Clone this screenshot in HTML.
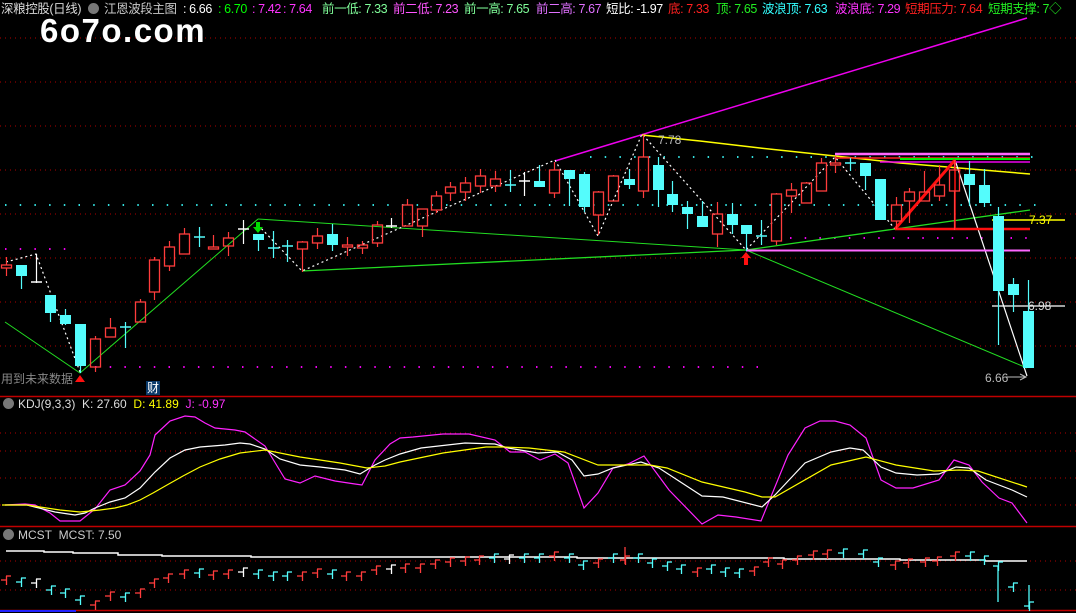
<!DOCTYPE html>
<html><head><meta charset="utf-8"><style>
html,body{margin:0;padding:0;background:#000;}
#w{position:relative;width:1076px;height:613px;overflow:hidden;background:#000;font-family:"Liberation Sans","Noto Sans CJK SC",sans-serif;}
.t{position:absolute;top:2px;font-size:12.5px;white-space:nowrap;line-height:14px;letter-spacing:-0.4px;}
svg{position:absolute;left:0;top:0;}
</style></head><body><div id="w">
<svg id="s" width="1076" height="613" xmlns="http://www.w3.org/2000/svg">
<g id="grid"></g>
<g id="lines"></g>
<g id="cand"></g>
<g id="over"></g>
</svg>
<div class="t" style="left:1px;color:#d8d8d8">深粮控股(日线)</div>
<div style="position:absolute;left:88px;top:3px;width:11px;height:11px;border-radius:50%;background:#777"></div>
<div class="t" style="left:104px;color:#c8c8c8">江恩波段主图</div>
<div class="t" style="left:183px;color:#fff">: 6.66</div>
<div class="t" style="left:218px;color:#00ff00">: 6.70</div>
<div class="t" style="left:252px;color:#ff33ff">: 7.42</div>
<div class="t" style="left:283px;color:#ff33ff">: 7.64</div>
<div class="t" style="left:322px;color:#80ff9a">前一低: 7.33</div>
<div class="t" style="left:393px;color:#ff55ff">前二低: 7.23</div>
<div class="t" style="left:464px;color:#80ff9a">前一高: 7.65</div>
<div class="t" style="left:536px;color:#e070ff">前二高: 7.67</div>
<div class="t" style="left:606px;color:#fff">短比: -1.97</div>
<div class="t" style="left:668px;color:#ff2020">底: 7.33</div>
<div class="t" style="left:716px;color:#22ee22">顶: 7.65</div>
<div class="t" style="left:762px;color:#33ffff">波浪顶: 7.63</div>
<div class="t" style="left:835px;color:#ff33ff">波浪底: 7.29</div>
<div class="t" style="left:905px;color:#ff2020">短期压力: 7.64</div>
<div class="t" style="left:988px;color:#22ee22">短期支撑: 7◇</div>
<div style="position:absolute;left:40px;top:13px;font-size:33px;line-height:36px;font-weight:bold;color:#fff;letter-spacing:1.5px;">6o7o.com</div>
<div style="position:absolute;left:1px;top:370px;font-size:12px;color:#888">用到未来数据</div>
<div style="position:absolute;left:146px;top:381px;width:14px;height:14px;background:#0a3a6a;color:#fff;font-size:12px;line-height:14px;text-align:center">财</div>
<div style="position:absolute;left:658px;top:133px;font-size:12px;color:#bbb">7.78</div>
<div style="position:absolute;left:1029px;top:213px;font-size:12px;color:#ffff00">7.37</div>
<div style="position:absolute;left:1028px;top:299px;font-size:12px;color:#ddd">6.98</div>
<div style="position:absolute;left:985px;top:371px;font-size:12px;color:#bbb">6.66</div>
<div style="position:absolute;left:3px;top:398px;width:11px;height:11px;border-radius:50%;background:#777"></div>
<div style="position:absolute;left:18px;top:397px;font-size:12px;color:#ddd;white-space:nowrap">KDJ(9,3,3)&nbsp; K: 27.60 <span style="color:#ffff00">&nbsp;D: 41.89</span> <span style="color:#ff33ff">&nbsp;J: -0.97</span></div>
<div style="position:absolute;left:3px;top:529px;width:11px;height:11px;border-radius:50%;background:#777"></div>
<div style="position:absolute;left:18px;top:528px;font-size:12px;color:#ccc;white-space:nowrap">MCST&nbsp; MCST: 7.50</div>
</div>
<script>
var NS="http://www.w3.org/2000/svg";
function el(p,t,a){var e=document.createElementNS(NS,t);for(var k in a)e.setAttribute(k,a[k]);document.getElementById(p).appendChild(e);return e;}
function line(p,x1,y1,x2,y2,c,w,d){var a={x1:x1,y1:y1,x2:x2,y2:y2,stroke:c,"stroke-width":w||1};if(d)a["stroke-dasharray"]=d;return el(p,"line",a);}
function pl(p,pts,c,w,d){var a={points:pts.map(function(q){return q.join(",")}).join(" "),fill:"none",stroke:c,"stroke-width":w||1};if(d)a["stroke-dasharray"]=d;return el(p,"polyline",a);}
[38,82,126,170,214,258,302,346].forEach(function(y){line("grid",0,y,1076,y,"#b00000",1,"1 4");});
[433,451,478,505,561,590].forEach(function(y){line("grid",0,y,1076,y,"#b00000",1,"1 4");});
line("grid",0,396.5,1076,396.5,"#c00000",1.5);line("grid",0,526.5,1076,526.5,"#c00000",1.5);line("grid",0,610.5,1076,610.5,"#c00000",1.5);
line("grid",0,611,76,611,"#2020ff",2);
for(var x=5;x<1035;x+=14.7){el("grid","rect",{x:x,y:204,width:1.5,height:2,fill:"#33dddd"});}
for(var x=590;x<1035;x+=14.7){el("grid","rect",{x:x,y:156,width:1.5,height:2,fill:"#33dddd"});}
for(var x=5;x<70;x+=14.7){el("grid","rect",{x:x,y:248,width:1.5,height:2,fill:"#ee00ee"});}
for(var x=95;x<770;x+=14.7){el("grid","rect",{x:x,y:366,width:1.5,height:2,fill:"#ee00ee"});}
for(var x=790;x<1035;x+=14.7){el("grid","rect",{x:x,y:237,width:1.5,height:2,fill:"#ee00ee"});}
line("lines",555,161,1027,18,"#ee00ee",1.5);
pl("lines",[[642,135],[700,141],[760,148],[835,156],[900,163],[1030,174]],"#ffff00",1.5);
pl("lines",[[5,322],[80,373],[258,219]],"#22dd22",1);
pl("lines",[[258,219],[746,250],[1027,368]],"#22dd22",1);
pl("lines",[[302,271],[746,250],[1030,210]],"#22dd22",1.3);
pl("lines",[[6,262],[36,254],[80,372]],"#fff",1.2,"2 3");
pl("lines",[[258,225],[302,271],[555,160],[598,236],[642,134],[746,250],[835,157],[895,229]],"#fff",1.2,"2 3");
line("lines",955,160,1027,376,"#fff",1.2);
line("lines",835,154,1030,154,"#ff66ff",2.5);
line("lines",835,158,1030,158,"#ff2020",1.5);
line("lines",900,159,1030,159,"#00ee00",2);
line("lines",880,162,1030,162,"#ee00ee",1.5);
line("lines",746,250.5,1030,250.5,"#ff66ff",2);
line("lines",895,229,1030,229,"#ff1010",2.5);
line("lines",992,220,1065,220,"#ffff00",1.5);
line("lines",992,306,1065,306,"#fff",1.2);
line("lines",1005,377,1025,377,"#bbb",1);
el("lines","path",{d:"M1020 374 L1026 377 L1020 380",fill:"none",stroke:"#bbb"});
line("lines",895,229,955,160,"#ff1010",3);
line("lines",955,160,955,230,"#ff1010",1.5);
var C=[[6,257,265,268,276,'r'],[21,265,265,276,289,'c'],[36,254,282,283,283,'w'],[50,295,295,313,322,'c'],[65,309,315,324,325,'c'],[80,324,324,366,373,'c'],[95,336,339,367,372,'r'],[110,318,328,337,337,'r'],[125,322,327,328,348,'x'],[140,299,302,322,322,'r'],[154,257,260,292,300,'r'],[169,241,247,266,271,'r'],[184,228,234,254,254,'r'],[199,227,237,238,247,'x'],[213,235,247,249,249,'r'],[228,232,238,246,256,'r'],[243,220,229,230,244,'w'],[258,234,234,240,251,'c'],[273,231,248,249,258,'x'],[287,240,246,247,262,'x'],[302,241,242,249,272,'r'],[317,228,236,243,249,'r'],[332,224,234,245,251,'c'],[347,237,245,247,256,'r'],[362,241,245,248,254,'r'],[377,221,225,243,247,'r'],[391,218,226,227,228,'w'],[407,199,205,226,226,'r'],[422,209,209,226,237,'r'],[436,191,196,210,213,'r'],[450,182,187,193,201,'r'],[465,177,183,192,201,'r'],[480,169,176,186,193,'r'],[495,171,179,186,192,'r'],[510,170,185,186,192,'x'],[524,172,181,182,196,'w'],[539,165,181,187,187,'c'],[554,162,170,193,198,'r'],[569,170,170,179,206,'c'],[584,172,174,207,212,'c'],[598,191,192,215,235,'r'],[613,175,176,201,201,'r'],[629,169,179,185,189,'c'],[643,135,157,191,198,'r'],[658,157,165,190,207,'c'],[672,181,194,205,212,'c'],[687,201,207,214,229,'c'],[702,201,216,227,227,'c'],[717,202,214,234,247,'r'],[732,203,214,225,234,'c'],[746,225,225,234,251,'c'],[761,220,236,238,245,'x'],[776,193,194,241,245,'r'],[791,183,190,196,213,'r'],[806,182,183,203,203,'r'],[821,158,163,191,191,'r'],[835,156,163,165,173,'r'],[850,158,163,165,171,'x'],[865,163,163,176,190,'c'],[880,179,179,220,220,'c'],[896,197,205,221,229,'r'],[909,188,192,201,223,'r'],[924,171,192,201,201,'r'],[939,165,185,196,201,'r'],[954,160,170,191,230,'r'],[969,161,174,185,206,'c'],[984,169,185,203,207,'c'],[998,207,216,291,345,'c'],[1013,278,284,295,312,'c'],[1028,280,311,368,368,'c']];
C.forEach(function(c){var x=c[0],hi=c[1],t=c[2],b=c[3],lo=c[4],k=c[5];
 if(k=='r'){line("cand",x+.5,hi,x+.5,t,"#ff3c3c",1.2);line("cand",x+.5,b,x+.5,lo,"#ff3c3c",1.2);el("cand","rect",{x:x-4.5,y:t,width:10,height:Math.max(b-t,1.5),fill:"none",stroke:"#ff3c3c","stroke-width":1.3});}
 else if(k=='c'){line("cand",x+.5,hi,x+.5,lo,"#54fcfc",1.2);el("cand","rect",{x:x-5,y:t,width:11,height:Math.max(b-t,2),fill:"#54fcfc"});}
 else{var col=k=='w'?"#fff":"#54fcfc";line("cand",x+.5,hi,x+.5,lo,col,1.2);line("cand",x-5,t,x+6,t,col,1.5);}
});
el("over","path",{d:"M80 375 L75 382 L85 382 Z",fill:"#ff1010"});
el("over","path",{d:"M256 222 L260 222 L260 227 L263 227 L258 233 L253 227 L256 227 Z",fill:"#00dd00"});
el("over","path",{d:"M744 265 L748 265 L748 258 L751 258 L746 252 L741 258 L744 258 Z",fill:"#ff1010"});
var J=[[5,505],[25,504],[35,505],[50,513],[60,521],[80,521],[95,509],[110,490],[125,485],[140,471],[150,455],[155,435],[170,421],[185,416],[195,417],[205,423],[215,428],[235,430],[245,432],[265,446],[285,479],[300,483],[315,476],[335,481],[355,484],[362,485],[375,460],[390,444],[400,438],[413,437],[443,434],[469,434],[495,440],[510,452],[525,452],[540,460],[555,454],[568,463],[584,508],[598,493],[613,468],[628,464],[644,456],[669,490],[702,524],[718,515],[736,517],[761,521],[788,455],[805,428],[820,421],[835,421],[850,425],[866,438],[881,480],[896,488],[913,488],[939,480],[954,460],[969,465],[982,482],[999,498],[1012,503],[1027,523]];
var K=[[5,505],[27,505],[35,507],[55,512],[75,515],[85,513],[95,508],[110,502],[125,498],[140,488],[155,472],[170,458],[185,450],[200,447],[225,445],[240,443],[250,444],[265,449],[280,459],[300,465],[320,467],[345,470],[360,474],[375,465],[385,460],[400,454],[421,448],[465,443],[495,444],[508,448],[538,453],[557,452],[572,460],[584,476],[598,474],[613,468],[641,462],[659,468],[702,496],[723,497],[762,507],[775,495],[805,463],[831,452],[850,448],[863,450],[881,467],[896,473],[917,475],[939,474],[956,467],[969,468],[986,480],[1012,490],[1027,497]];
var D=[[2,505],[27,505],[40,507],[60,510],[80,512],[100,510],[115,508],[127,505],[140,500],[153,493],[167,485],[183,476],[200,467],[220,459],[240,453],[265,450],[300,457],[340,463],[367,468],[385,466],[400,462],[443,453],[486,447],[503,447],[529,448],[564,452],[598,465],[650,465],[667,468],[702,482],[745,492],[762,497],[775,497],[831,465],[866,457],[896,465],[934,471],[960,470],[978,471],[1021,485],[1027,487]];
pl("lines",J,"#ff22ff",1.2);pl("lines",K,"#fff",1.2);pl("lines",D,"#ffff00",1.2);
pl("lines",[[6,551],[44,551],[44,552],[73,552],[73,553],[118,553],[118,555],[162,555],[162,556],[251,556],[251,557],[340,557],[540,557],[577,557],[577,558],[784,558],[784,559],[900,559],[900,560],[985,560],[985,561],[1027,561]],"#fff",1.5);
var T=[[6,580,'r'],[21,582,'c'],[36,583,'w'],[51,590,'c'],[65,593,'c'],[80,600,'c'],[95,605,'r'],[110,596,'r'],[125,597,'c'],[140,593,'r'],[154,583,'r'],[168,578,'r'],[184,574,'r'],[199,573,'c'],[213,575,'r'],[228,574,'r'],[243,572,'w'],[258,574,'c'],[273,576,'c'],[287,576,'c'],[302,576,'r'],[317,573,'r'],[332,574,'c'],[346,576,'r'],[361,576,'r'],[376,570,'r'],[391,569,'w'],[405,568,'r'],[420,568,'r'],[435,564,'r'],[450,562,'r'],[465,561,'r'],[479,560,'r'],[494,558,'c'],[509,559,'w'],[524,558,'c'],[539,558,'c'],[554,556,'r'],[569,558,'c'],[583,565,'c'],[598,563,'r'],[613,558,'c'],[625,560,'r'],[638,558,'c'],[652,563,'c'],[667,566,'c'],[681,569,'c'],[697,572,'r'],[711,569,'c'],[725,572,'c'],[739,573,'c'],[754,571,'r'],[768,562,'r'],[782,564,'r'],[797,560,'r'],[813,555,'r'],[827,554,'r'],[843,553,'c'],[863,554,'c'],[878,562,'c'],[895,565,'r'],[908,563,'r'],[925,562,'r'],[937,561,'r'],[955,556,'r'],[970,556,'c'],[984,560,'c'],[998,566,'c'],[1013,587,'c'],[1029,606,'c']];
T.forEach(function(t){var x=t[0],y=t[1],col=t[2]=='r'?"#ff3c3c":t[2]=='c'?"#54fcfc":"#fff";
 line("lines",x-5,y,x,y,col,1.3);line("lines",x+.5,y-4,x+.5,y+5,col,1.3);line("lines",x,y-4,x+5,y-4,col,1.3);});
line("lines",998,566,998,602,"#54fcfc",1.3);line("lines",1029,585,1029,609,"#54fcfc",1.3);line("lines",625,547,625,564,"#ff3c3c",1.3);
</script>
</body></html>
